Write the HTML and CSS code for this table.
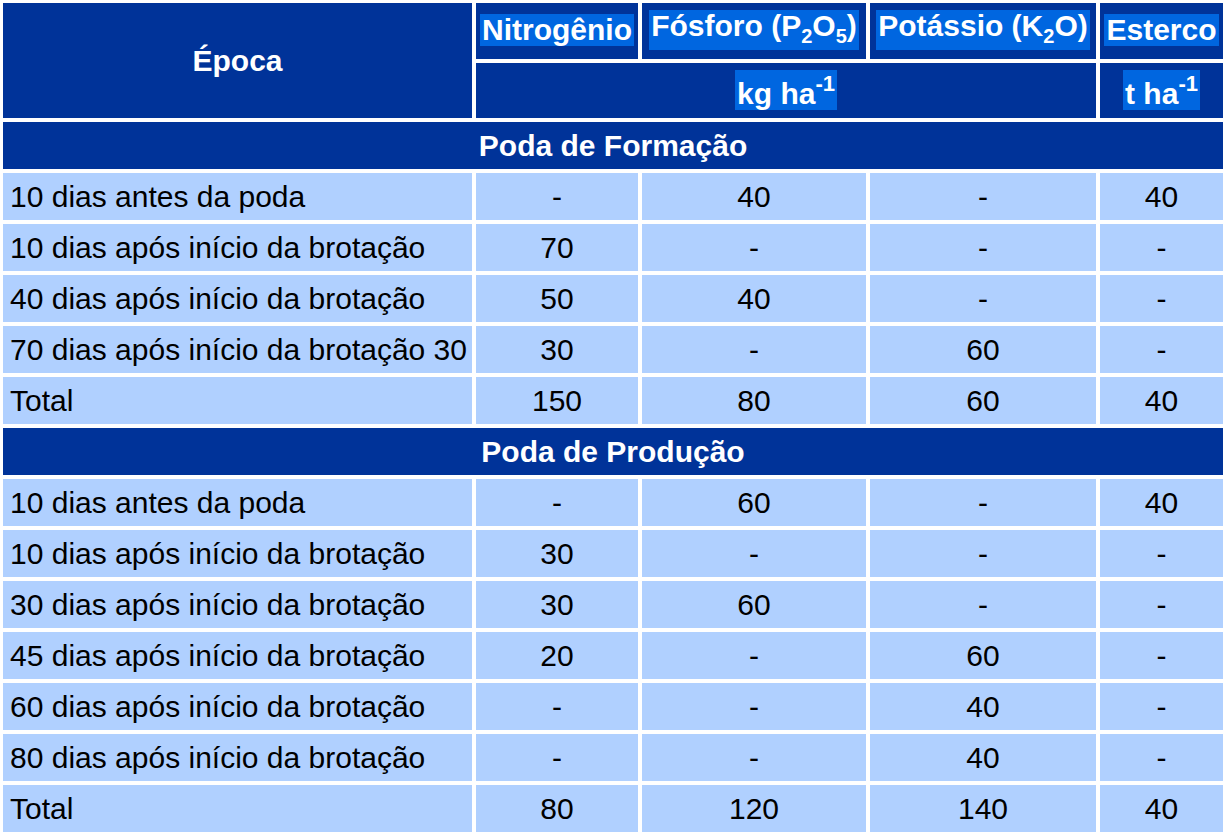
FILE: index.html
```html
<!DOCTYPE html>
<html lang="pt">
<head>
<meta charset="utf-8">
<title>Adubação</title>
<link rel="stylesheet" href="styles.css">
</head>
<body>
<table class="tbl">
  <colgroup>
    <col class="c1"><col class="c2"><col class="c3"><col class="c4"><col class="c5">
  </colgroup>
  <thead>
    <tr class="h1">
      <th rowspan="2" class="epoca">Época</th>
      <th><span class="hl">Nitrogênio</span></th>
      <th><span class="hl sb">Fósforo (P<sub>2</sub>O<sub>5</sub>)</span></th>
      <th><span class="hl sb">Potássio (K<sub>2</sub>O)</span></th>
      <th><span class="hl">Esterco</span></th>
    </tr>
    <tr class="h2">
      <th colspan="3"><span class="hl">kg ha<sup>-1</sup></span></th>
      <th><span class="hl">t ha<sup>-1</sup></span></th>
    </tr>
  </thead>
  <tbody>
    <tr class="sec"><td colspan="5">Poda de Formação</td></tr>
    <tr><td>10 dias antes da poda</td><td>-</td><td>40</td><td>-</td><td>40</td></tr>
    <tr><td>10 dias após início da brotação</td><td>70</td><td>-</td><td>-</td><td>-</td></tr>
    <tr><td>40 dias após início da brotação</td><td>50</td><td>40</td><td>-</td><td>-</td></tr>
    <tr><td>70 dias após início da brotação 30</td><td>30</td><td>-</td><td>60</td><td>-</td></tr>
    <tr><td>Total</td><td>150</td><td>80</td><td>60</td><td>40</td></tr>
    <tr class="sec"><td colspan="5">Poda de Produção</td></tr>
    <tr><td>10 dias antes da poda</td><td>-</td><td>60</td><td>-</td><td>40</td></tr>
    <tr><td>10 dias após início da brotação</td><td>30</td><td>-</td><td>-</td><td>-</td></tr>
    <tr><td>30 dias após início da brotação</td><td>30</td><td>60</td><td>-</td><td>-</td></tr>
    <tr><td>45 dias após início da brotação</td><td>20</td><td>-</td><td>60</td><td>-</td></tr>
    <tr><td>60 dias após início da brotação</td><td>-</td><td>-</td><td>40</td><td>-</td></tr>
    <tr><td>80 dias após início da brotação</td><td>-</td><td>-</td><td>40</td><td>-</td></tr>
    <tr><td>Total</td><td>80</td><td>120</td><td>140</td><td>40</td></tr>
  </tbody>
</table>
</body>
</html>
```
FILE: styles.css
```css
html, body {
  margin: 0;
  padding: 0;
  background: #ffffff;
}

.tbl {
  table-layout: fixed;
  border-collapse: separate;
  border-spacing: 4px;
  margin: -1px 0 0 -1px;
  width: 1228px;
  font-family: "Liberation Sans", Arial, sans-serif;
  font-size: 30px;
}

.c1 { width: 469px; }
.c2 { width: 162px; }
.c3 { width: 224px; }
.c4 { width: 226px; }
.c5 { width: 123px; }

.tbl th {
  background: #003399;
  color: #ffffff;
  font-weight: bold;
  text-align: center;
  vertical-align: middle;
  padding: 0;
  white-space: nowrap;
}

.h1 th { height: 53px; padding-bottom: 3px; }
.h1 th.epoca { padding: 0; }
.h2 th { height: 55px; }

.hl {
  display: inline-block;
  background: #0066e0;
  padding: 0 2px;
  line-height: 32px;
}

.hl.sb { padding-bottom: 8px; }

.hl sub, .hl sup {
  line-height: 0;
}

.hl sub {
  font-size: 20px;
  vertical-align: -7px;
}

.hl sup {
  font-size: 22px;
  vertical-align: 13px;
}

.h2 .hl { padding-top: 8px; }

.sec td {
  background: #003399;
  color: #ffffff;
  font-weight: bold;
  text-align: center;
  height: 47px;
  padding: 0;
}

.tbl td {
  height: 47px;
  padding: 0;
  vertical-align: middle;
  white-space: nowrap;
}

.tbl tbody tr:not(.sec) td {
  background: #b0d0ff;
  color: #000000;
  text-align: center;
}

.tbl tbody tr:not(.sec) td:first-child {
  text-align: left;
  padding-left: 7px;
}
```
